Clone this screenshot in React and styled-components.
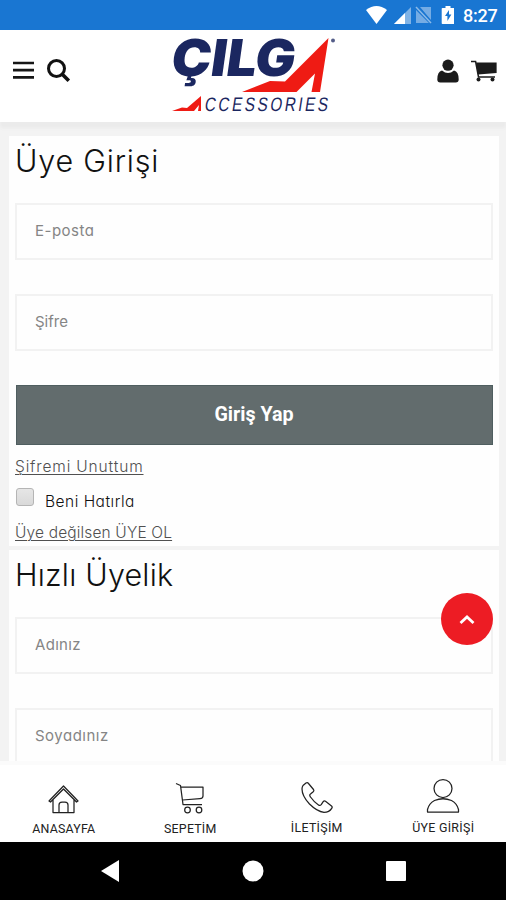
import React from "react";
import styled, { createGlobalStyle } from "styled-components";

const GlobalStyle = createGlobalStyle`
  * {
    box-sizing: border-box;
  }
  body {
    margin: 0;
    background: #f3f3f3;
    font-family: Inter, "Noto Sans", sans-serif;
    font-feature-settings: "cv11";
    color: #111;
  }
`;

const Screen = styled.div`
  height: 900px;
  display: flex;
  flex-direction: column;
  overflow: hidden;
`;

const StatusBar = styled.div`
  height: 30px;
  flex: none;
  padding-right: 9px;
  display: flex;
  align-items: center;
  justify-content: flex-end;
  background: #1976d2;
  color: #fff;
`;

const Clock = styled.span`
  width: 34px;
  margin-left: 9px;
  font: 500 18px/30px Roboto, sans-serif;
  letter-spacing: -0.2px;
  padding-top: 1px;
`;

const Header = styled.header`
  height: 92px;
  flex: none;
  padding: 0 9px;
  display: grid;
  grid-template-columns: 1fr 170px 1fr;
  background: #fff;
  box-shadow: 0 6px 3px #ebebeb;
  position: relative;
`;

const HeaderSide = styled.div`
  display: flex;
  align-items: center;
  gap: 12px;
  height: 82px;
  padding-left: 3px;
  justify-content: ${(p) => (p.$right ? "flex-end" : "flex-start")};
`;

const LogoSvg = styled.svg`
  display: block;
  width: 170px;
  height: 92px;
  overflow: visible;
`;

const Content = styled.main`
  flex: 1;
  min-height: 0;
  overflow: hidden;
  padding: 14px 7px 0 9px;
`;

const Card = styled.section`
  height: ${(p) => p.$height}px;
  margin-bottom: 4px;
  padding: 0 6px;
  background: #fefefe;
`;

const Title = styled.h1`
  margin: 0;
  height: 67px;
  font-size: 30.5px;
  font-weight: 300;
  line-height: 50px;
  letter-spacing: ${(p) => p.$spacing}px;
`;

const Field = styled.input`
  display: block;
  width: 478px;
  height: 57px;
  margin: 0 0 34px;
  padding: 0 18px 2px;
  border: 2px solid #f2f2f2;
  border-radius: 0;
  background: #fefefe;
  font: 400 15px Inter, "Noto Sans", sans-serif;
  font-feature-settings: "cv11";
  letter-spacing: ${(p) => p.$spacing || 0}px;
  outline: none;

  &::placeholder {
    color: #858585;
    opacity: 1;
  }
`;

const SubmitButton = styled.button`
  display: block;
  width: 477px;
  height: 60px;
  margin-left: 1px;
  padding: 0 1px 2px 0;
  border: 1px solid #4f5e60;
  background: #626c6d;
  color: #fff;
  font: 700 19.7px Roboto, sans-serif;
`;

const TextLink = styled.a`
  display: block;
  width: max-content;
  font-size: 15.5px;
  font-weight: 300;
  line-height: 24px;
  letter-spacing: ${(p) => p.$spacing}px;
  color: #505050;
  text-decoration: underline;
  text-decoration-thickness: 1px;
  text-underline-offset: 2px;
`;

const Remember = styled.label`
  display: flex;
  align-items: center;
  height: 42px;
  padding-top: 2px;
  font-size: 15.5px;
  font-weight: 300;
  letter-spacing: 0.5px;
  color: #111;
`;

const Checkbox = styled.input`
  appearance: none;
  width: 18px;
  height: 18px;
  margin: -8px 11px 0 1px;
  border: 1px solid #b5b5b5;
  border-radius: 3px;
  background: linear-gradient(#e6e6e6, #d9d9d9);
`;

const LinkArea = styled.div`
  padding-top: 10px;
`;

const ScrollTop = styled.button`
  position: absolute;
  left: 441px;
  top: 593px;
  width: 52px;
  height: 52px;
  padding: 0;
  border: 0;
  border-radius: 50%;
  background: #ed1c24;
  display: flex;
  align-items: center;
  justify-content: center;
`;

const TabBar = styled.nav`
  height: 81px;
  flex: none;
  display: grid;
  grid-template-columns: repeat(4, 1fr);
  background: #fff;
  border-top: 4px solid #fbfbfb;
  position: relative;
`;

const Tab = styled.a`
  display: flex;
  flex-direction: column;
  align-items: center;
  padding: ${(p) => p.$top}px 0 0 1px;
  font: 400 12.4px/16px Roboto, sans-serif;
  letter-spacing: ${(p) => p.$spacing || 0}px;
  color: #222;

  svg {
    margin-bottom: ${(p) => p.$gap}px;
  }
`;

const SystemNav = styled.div`
  height: 58px;
  flex: none;
  display: flex;
  align-items: center;
  justify-content: center;
  gap: 122px;
  background: #000;
`;

const StatusIcons = () => (
  <svg width="88" height="20" viewBox="366 5 88 20" fill="#fff">
    <path d="M366 10q10.500-8 21 0L376.500 24Z" />
    <path d="M411 7v17h-17Z" opacity=".45" />
    <path d="M405 13v11h-11Z" />
    <path d="M420 7h11v13ZM416 10l13 13h-13Z" opacity=".4" />
    <path d="m416 7 15 16" stroke="#fff" strokeWidth="1.500" opacity=".5" />
    <path d="M445.500 6h5v2h3q.8 0 .8.800v14.400q0 .8-.8.800h-11q-.8 0-.8-.800V8.800q0-.8.8-.800h3Z" />
    <path d="m449 10-4 6h2.400v5l4-6.500H449Z" fill="#1976d2" />
  </svg>
);

const MenuIcon = () => (
  <svg width="23" height="20" viewBox="0 0 23 20" stroke="#161616" strokeWidth="2.700">
    <path d="M1 2h21M1 9.200h21M1 16.400h21" />
  </svg>
);

const SearchIcon = () => (
  <svg width="24" height="25" viewBox="0 0 24 25" fill="none" stroke="#111">
    <circle cx="9.500" cy="9.500" r="8" strokeWidth="3" />
    <path d="m15.500 15.500 6.300 6.300" strokeWidth="3.600" />
  </svg>
);

const UserIcon = () => (
  <svg width="22" height="24" viewBox="0 0 22 24" fill="#1b1b1b">
    <circle cx="11" cy="6.200" r="5.600" />
    <path d="M5 11.500q-4.700 1-4.700 9 0 3 3 3h15.400q3 0 3-3Q21.700 12.500 17 11.500q-6 5-12 0Z" />
  </svg>
);

const CartIcon = () => (
  <svg width="26" height="22" viewBox="0 0 26 22" fill="#1b1b1b">
    <path d="M5 2.500h20.600v10.500L7 14.500Z" />
    <path d="M0 1.500h4.600L7.500 17H24" fill="none" stroke="#1b1b1b" strokeWidth="1.500" />
    <circle cx="7.500" cy="19.500" r="2" />
    <circle cx="21.500" cy="19.500" r="2" />
  </svg>
);

const Logo = () => (
  <LogoSvg viewBox="168 30 170 92">
    <g fill="#1b2760">
      <text
        transform="translate(169.500 75.500) skewX(-8)"
        fontFamily="Inter, sans-serif"
        fontSize="51"
        fontWeight="900"
        textLength="124"
        lengthAdjust="spacingAndGlyphs"
      >
        ÇILG
      </text>
      <text
        transform="translate(204 110.500) skewX(-9) scale(.78 1)"
        fontFamily="Liberation Sans, sans-serif"
        fontSize="19.500"
        textLength="158"
        lengthAdjust="spacing"
      >
        CCESSORIES
      </text>
      <circle cx="333" cy="40.500" r="2" opacity=".75" />
    </g>
    <path d="M328.500 38 285 81.500 270 81 242 92h54.500L315 73.500 311.500 92h8.500Z" fill="#ef1b14" />
    <path d="m201 96-14 12-5-.5-10 3.500h22l5-6-1 6h3Z" fill="#ef1b14" />
  </LogoSvg>
);

const lineProps = { fill: "none", stroke: "#222", strokeWidth: 1.25, strokeLinejoin: "round" };

const HomeIcon = () => (
  <svg width="32" height="32" viewBox="0 0 32 32" {...lineProps}>
    <path d="M1 17 15.500 2 30 17l-1.500 1-13-13-13 13ZM5 16v12.500h21V16M11 28v-7q0-3 3-3h3q3 0 3 3v7" />
  </svg>
);

const BasketIcon = () => (
  <svg width="32" height="32" viewBox="0 0 32 32" {...lineProps}>
    <path d="M2 1.500l4.500 2L9 22.500h19M7 5h22v9q0 2.500-3 2.700L8.500 18" />
    <circle cx="13.500" cy="28" r="2.800" />
    <circle cx="25" cy="28" r="2.800" />
  </svg>
);

const PhoneIcon = () => (
  <svg width="32" height="32" viewBox="0 0 32 32" {...lineProps}>
    <path d="M2 3.500 5 1q1.500-.8 2.500.5l5 6q.8 1.200-.3 2.200L9.500 12q-1.500 1 0 3 3.500 5 8 8 1.500 1 2.700-.3l2-3q1-1.300 2.300-.4l6 4.700q1.200 1 .2 2.300-2.500 4-7.700 4-7-.8-14.500-8.300Q1 14 1 7q0-2 1-3.500Z" />
  </svg>
);

const MemberIcon = () => (
  <svg width="34" height="36" viewBox="0 0 34 36" {...lineProps}>
    <circle cx="17" cy="10.500" r="9" />
    <path d="M1.500 34v-2.500q1.500-6 7-9 8.500-3.500 17 0 5.500 3 7 9V34Z" />
  </svg>
);

const App = () => {
  return (
    <Screen>
      <GlobalStyle />
      <StatusBar>
        <StatusIcons />
        <Clock>8:27</Clock>
      </StatusBar>
      <Header>
        <HeaderSide>
          <MenuIcon />
          <SearchIcon />
        </HeaderSide>
        <Logo />
        <HeaderSide $right>
          <UserIcon />
          <CartIcon />
        </HeaderSide>
      </Header>
      <Content>
        <Card $height={410}>
          <Title $spacing={0.8}>Üye Girişi</Title>
          <Field placeholder="E-posta" $spacing={0.5} />
          <Field type="password" placeholder="Şifre" />
          <SubmitButton>Giriş Yap</SubmitButton>
          <LinkArea>
            <TextLink $spacing={0.85}>Şifremi Unuttum</TextLink>
            <Remember>
              <Checkbox type="checkbox" />
              Beni Hatırla
            </Remember>
            <TextLink $spacing={0.15}>Üye değilsen ÜYE OL</TextLink>
          </LinkArea>
        </Card>
        <Card $height={260}>
          <Title $spacing={0.2}>Hızlı Üyelik</Title>
          <Field placeholder="Adınız" $spacing={0.3} />
          <Field placeholder="Soyadınız" $spacing={0.5} />
        </Card>
      </Content>
      <TabBar>
        <Tab $top={19} $gap={5} $spacing={0.2}>
          <HomeIcon />
          ANASAYFA
        </Tab>
        <Tab $top={17} $gap={7} $spacing={0.2}>
          <BasketIcon />
          SEPETİM
        </Tab>
        <Tab $top={17} $gap={6} $spacing={0.3}>
          <PhoneIcon />
          İLETİŞİM
        </Tab>
        <Tab $top={13} $gap={6} $spacing={0.3}>
          <MemberIcon />
          ÜYE GİRİŞİ
        </Tab>
      </TabBar>
      <SystemNav>
        <svg width="20" height="22" fill="#fff">
          <path d="M19 0v22L1 11Z" />
        </svg>
        <svg width="22" height="22" fill="#fff">
          <circle cx="11" cy="11" r="10.500" />
        </svg>
        <svg width="20" height="20" fill="#fff">
          <rect width="20" height="20" rx="1" />
        </svg>
      </SystemNav>
      <ScrollTop aria-label="Yukarı">
        <svg width="16" height="11" fill="none" stroke="#fff" strokeWidth="2.800">
          <path d="m1.500 9 6.500-6 6.500 6" />
        </svg>
      </ScrollTop>
    </Screen>
  );
};

export default App;
